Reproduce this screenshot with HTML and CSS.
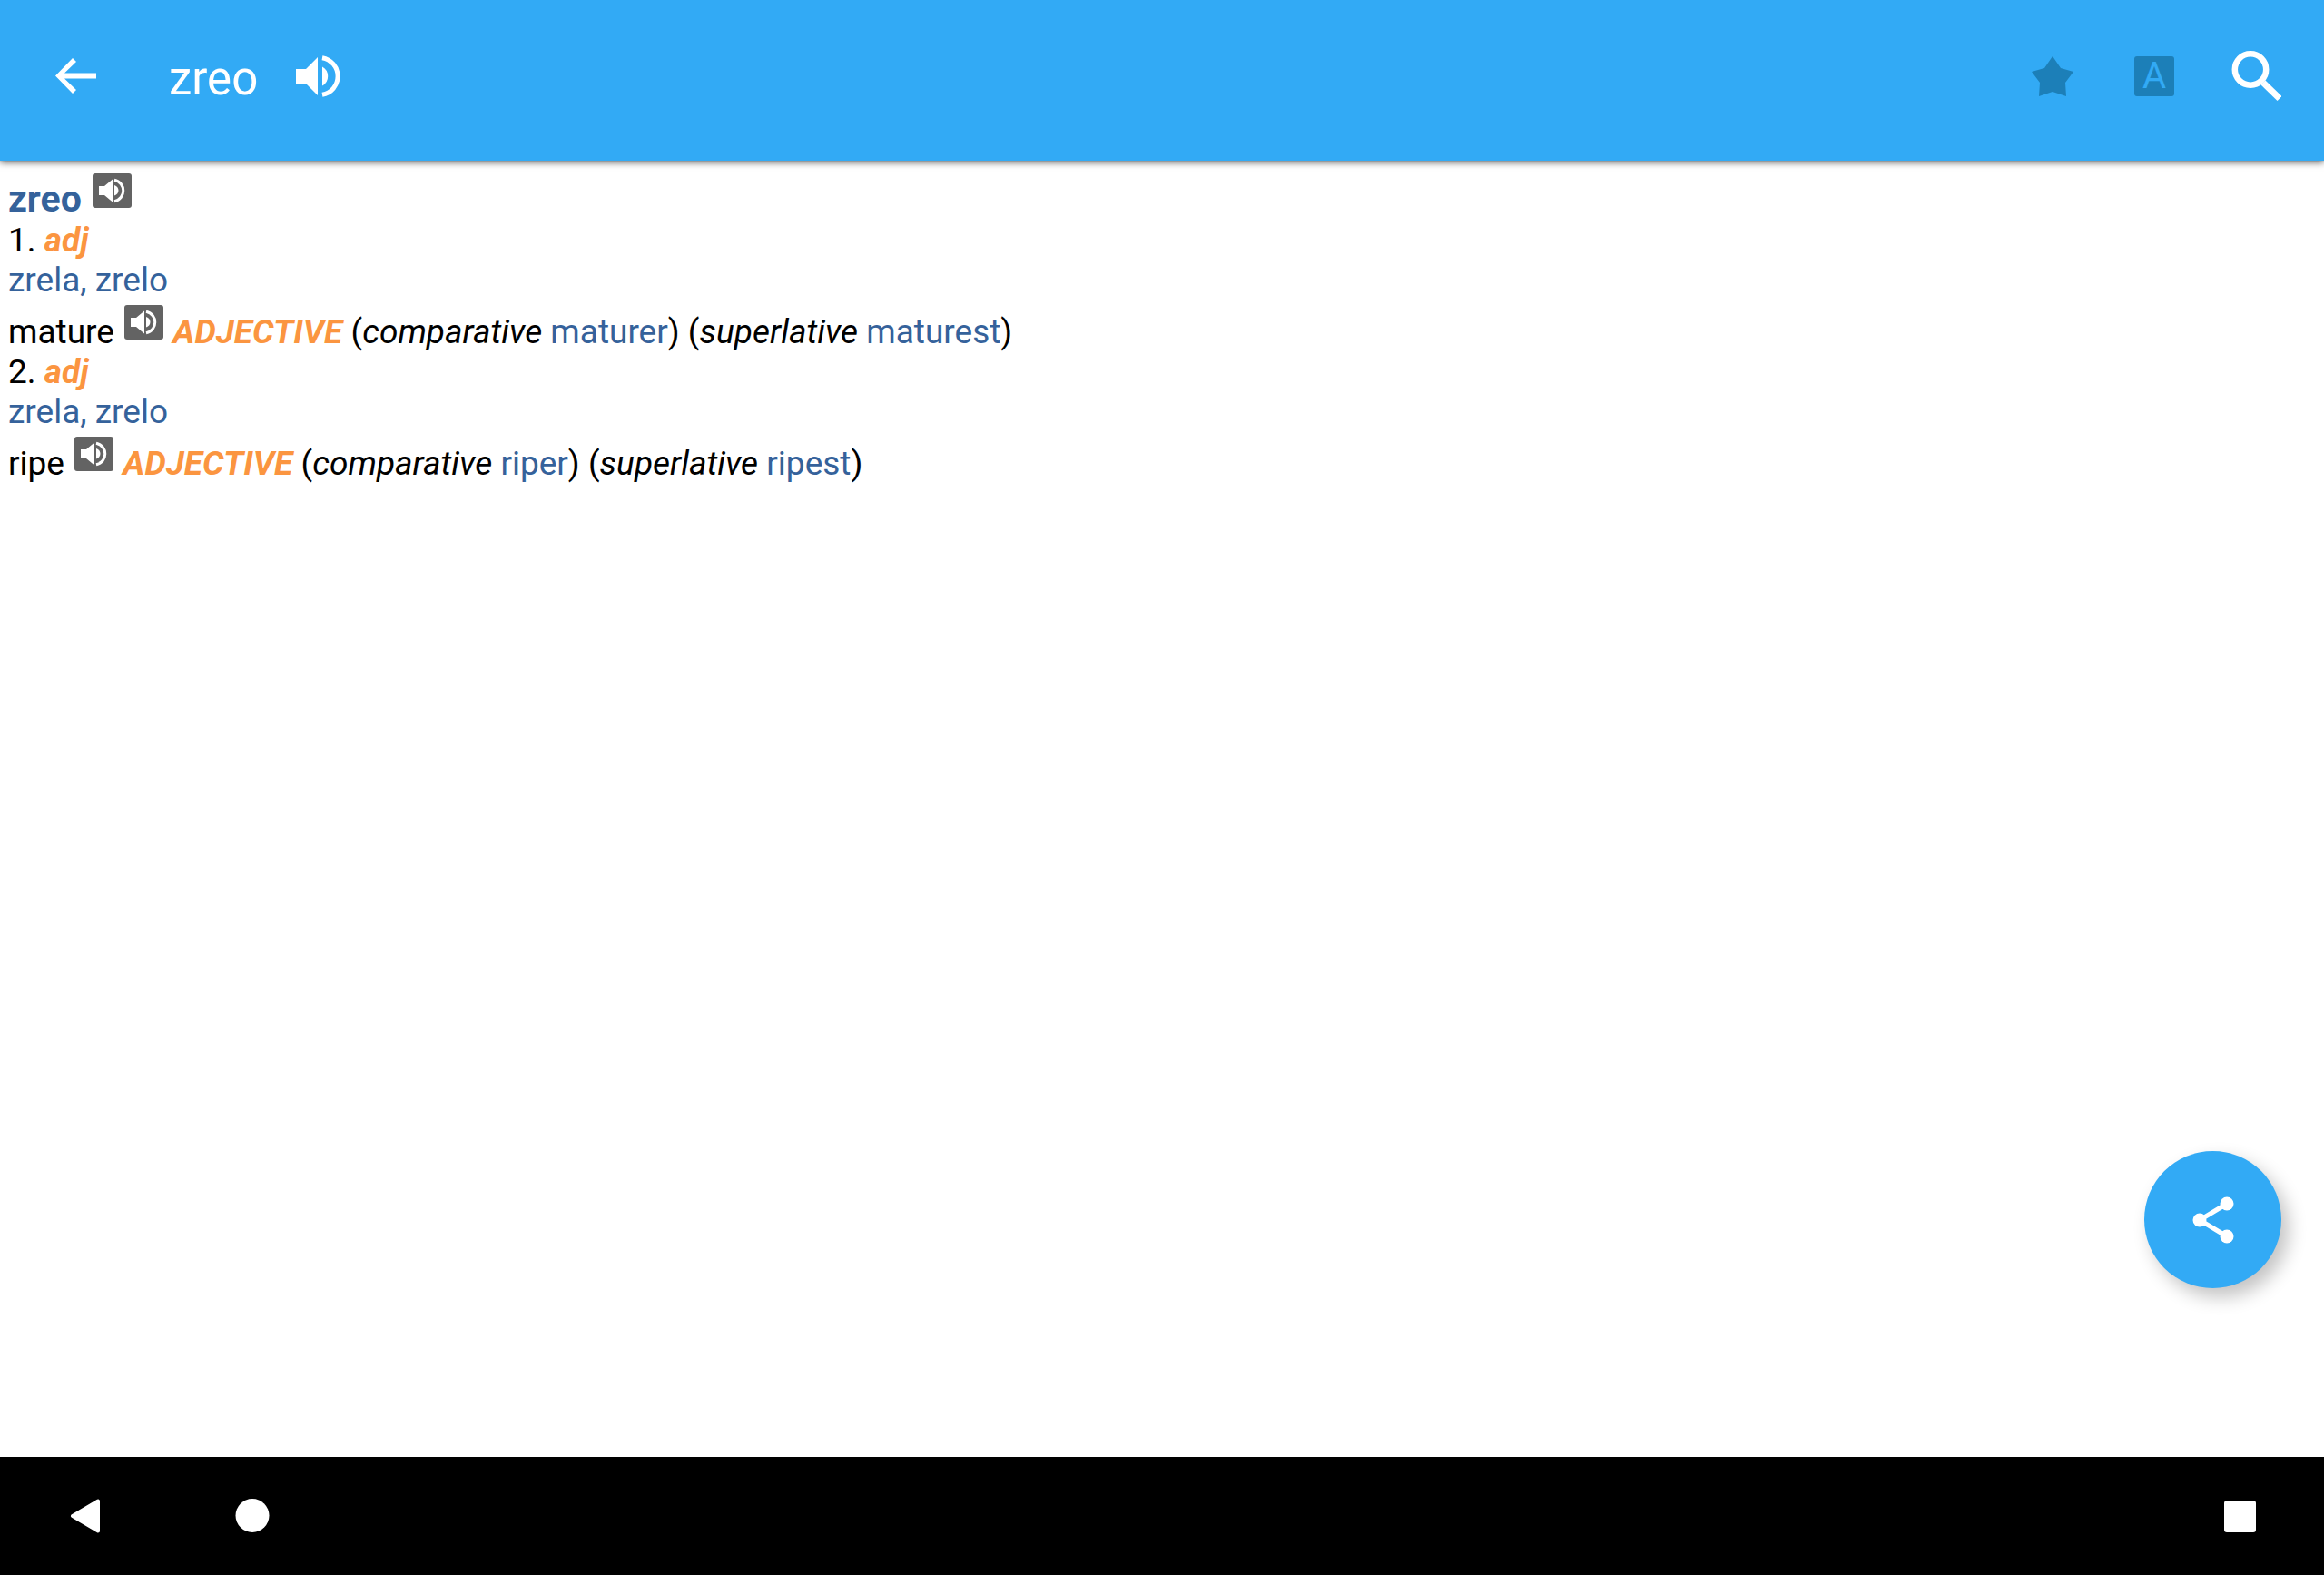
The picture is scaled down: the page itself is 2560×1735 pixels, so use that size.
FILE: index.html
```html
<!DOCTYPE html>
<html lang="sl">
<head>
    <meta charset="UTF-8">
    <meta name="viewport" content="width=device-width, initial-scale=1.0">
    <title>zreo</title>
    <link rel="stylesheet" href="styles.css">
</head>
<body>

<svg class="sprite" aria-hidden="true">
    <symbol id="speaker" viewBox="0 0 43 38">
        <path fill="#fff" d="M7 14h6l9-7.500v25L13 24H7zM24 13c6 2 6 9.500 0 11.500z"/>
        <path fill="none" stroke="#fff" stroke-width="3" d="M24 7.300c13 2.700 13 20.700 0 23.400"/>
    </symbol>
</svg>

<header class="toolbar">
    <button class="icon-btn" type="button" aria-label="Back">
        <svg width="45" height="39" viewBox="0 0 45 39"><path fill="#fff" d="M0 19.500L19 0l4 4-13 12.500h35v6H10L23 35l-4 4z"/></svg>
    </button>
    <h1 class="title">zreo</h1>
    <button class="icon-btn" type="button" aria-label="Listen">
        <svg width="48" height="46" viewBox="0 0 48 46">
            <path fill="#fff" d="M0 15h11L24 2v42L11 31H0zM29 12.500a12 12 0 0 1 0 21z"/>
            <path fill="none" stroke="#fff" stroke-width="5" d="M29 2.700a20.600 20.600 0 0 1 0 40.600"/>
        </svg>
    </button>
    <div class="actions">
        <button class="icon-btn" type="button" aria-label="Favourite">
            <svg width="46" height="44" viewBox="0 0 46 44"><path fill="#1c7fb8" d="M23 0l9 13 14 4-9 12 1 15-15-5-15 5 1-15-9-12 14-4z"/></svg>
        </button>
        <button class="icon-btn letter" type="button" aria-label="Text size"><span>A</span></button>
        <button class="icon-btn" type="button" aria-label="Search">
            <svg width="55" height="55" viewBox="0 0 55 55">
                <circle cx="21" cy="20.500" r="17.200" fill="none" stroke="#fff" stroke-width="6.500"/>
                <path fill="none" stroke="#fff" stroke-width="7" d="M35 35l18 17.500"/>
            </svg>
        </button>
    </div>
</header>

<main class="content">
    <h2 class="word"><a href="#">zreo</a> <button class="say" type="button" aria-label="Listen to zreo"><svg><use href="#speaker"/></svg></button></h2>
    <p>1. <b class="pos">adj</b></p>
    <p><a href="#">zrela, zrelo</a></p>
    <p>mature <button class="say" type="button" aria-label="Listen to mature"><svg><use href="#speaker"/></svg></button> <b class="pos">ADJECTIVE</b> (<i>comparative</i> <a href="#">maturer</a>) (<i>superlative</i> <a href="#">maturest</a>)</p>
    <p>2. <b class="pos">adj</b></p>
    <p><a href="#">zrela, zrelo</a></p>
    <p>ripe <button class="say" type="button" aria-label="Listen to ripe"><svg><use href="#speaker"/></svg></button> <b class="pos">ADJECTIVE</b> (<i>comparative</i> <a href="#">riper</a>) (<i>superlative</i> <a href="#">ripest</a>)</p>

    <button class="fab" type="button" aria-label="Share">
        <svg width="46" height="52" viewBox="0 0 46 52">
            <path fill="none" stroke="#fff" stroke-width="5" d="M38 8L8 26l30 18"/>
            <g fill="#fff"><circle cx="38" cy="8" r="7.500"/><circle cx="8" cy="26" r="7.500"/><circle cx="38" cy="44" r="7.500"/></g>
        </svg>
    </button>
</main>

<nav class="navbar">
    <button class="nav-btn" type="button" aria-label="Back">
        <svg width="34" height="38" viewBox="0 0 34 38"><path fill="#fff" stroke="#fff" stroke-width="4" stroke-linejoin="round" d="M31 2.500v33L3 19z"/></svg>
    </button>
    <button class="nav-btn" type="button" aria-label="Home">
        <svg width="38" height="38" viewBox="0 0 38 38"><circle cx="19" cy="18.500" r="18.500" fill="#fff"/></svg>
    </button>
    <button class="nav-btn recent" type="button" aria-label="Recent apps">
        <svg width="36" height="36" viewBox="0 0 36 36"><rect width="35" height="35" y="1" rx="3" fill="#fff"/></svg>
    </button>
</nav>

</body>
</html>
```
FILE: styles.css
```css
body {
    margin: 0;
    min-height: 100vh;
    display: flex;
    flex-direction: column;
    font-family: Roboto, sans-serif;
    font-size: 37px;
    line-height: 44px;
    color: #000;
    background: #fff;
}
button {
    padding: 0;
    border: none;
    background: none;
    font-family: inherit;
    cursor: pointer;
}
a {
    color: #35629b;
    text-decoration: none;
}
.sprite {
    display: none;
}
.toolbar {
    display: flex;
    align-items: center;
    height: 167px;
    padding: 0 19px 10px 27px;
    background: #32aaf5;
    box-shadow: 0 2px 7px rgba(0, 0, 0, 0.6);
}
.icon-btn {
    display: flex;
    align-items: center;
    justify-content: center;
    width: 112px;
    height: 112px;
}
.title {
    margin: 0 10px 0 47px;
    padding-top: 6px;
    font-size: 51px;
    font-weight: 400;
    line-height: 58px;
    color: #fff;
}
.actions {
    display: flex;
    margin-left: auto;
}
.letter span {
    width: 44px;
    height: 44px;
    border-radius: 3px;
    background: #1c7fb8;
    color: #32aaf5;
    font-size: 40px;
    line-height: 44px;
    text-align: center;
}
.content {
    position: relative;
    flex: 1;
    padding: 9px;
}
.content p {
    margin: 0;
}
.word {
    margin: 0;
    font-size: 41px;
    font-weight: 700;
    line-height: 48px;
}
.say {
    width: 43px;
    height: 38px;
    margin: 5px 1px 0 2px;
    border-radius: 3px;
    background: #636363;
    vertical-align: 4px;
}
.say svg {
    display: block;
    width: 43px;
    height: 38px;
}
.pos {
    color: #fb9540;
    font-style: italic;
}
.fab {
    position: absolute;
    right: 47px;
    bottom: 186px;
    display: flex;
    align-items: center;
    justify-content: center;
    width: 151px;
    height: 151px;
    border-radius: 50%;
    background: #32aaf5;
    box-shadow: 8px 10px 20px rgba(0, 0, 0, 0.24);
}
.navbar {
    display: flex;
    align-items: center;
    height: 130px;
    padding: 0 0 0 2px;
    background: #000;
}
.nav-btn {
    display: flex;
    align-items: center;
    justify-content: center;
    width: 184px;
    height: 130px;
}
.recent {
    margin-left: auto;
}
```
